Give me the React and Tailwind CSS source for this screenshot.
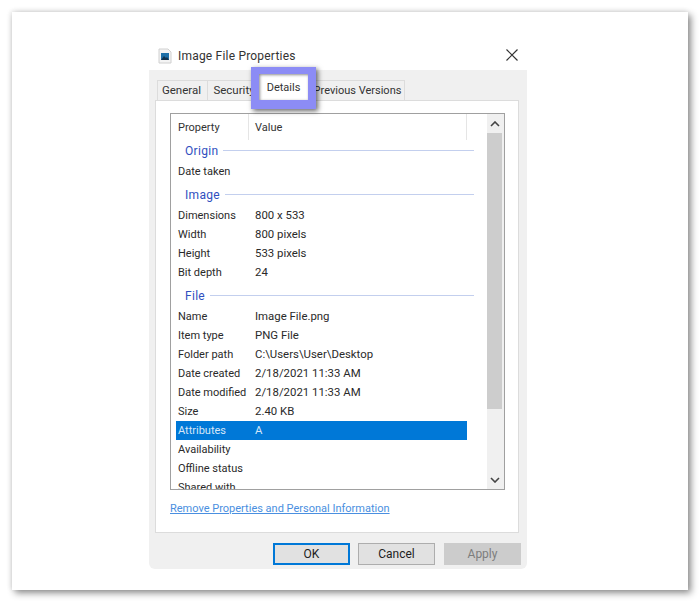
import React from "react";

const Row = ({ name, value, selected }) => (
  <div className={`ml-[5px] flex h-[19px] w-[291px] items-center pl-[2px] pt-[1px] ${selected ? "bg-[#0078d7] text-[#d5e6f7]" : "text-[#2a2a2a]"}`}>
    <span className="w-[77px] shrink-0 whitespace-nowrap text-[11px]">{name}</span>
    <span className="whitespace-nowrap text-[11.4px]">{value}</span>
  </div>
);

const Group = ({ title, mt }) => (
  <div className={`mb-[2px] flex h-[19px] w-[303px] items-center pl-[14px] ${mt}`}>
    <span className="text-[12px] tracking-[0.3px] text-[#2f4fc0]">{title}</span>
    <div className="ml-[5px] h-px flex-1 bg-[#c3cfee]"></div>
  </div>
);

const Tab = ({ label, width }) => (
  <div className={`flex h-[20px] items-center justify-center whitespace-nowrap border border-b-0 border-[#dcdcdc] bg-[#f0f0f0] pt-[1px] text-[#333] ${width}`}>
    {label}
  </div>
);

const Btn = ({ label, cls }) => (
  <div className={`flex h-[22px] w-[77px] items-center justify-center text-[12px] ${cls}`}>{label}</div>
);

export default function App() {
  return (
    <div className="h-[604px] w-[700px] bg-white pl-[12px] pt-[12px]" style={{ fontFamily: 'Roboto, sans-serif' }}>
      <div className="h-[578px] w-[676px] bg-white pl-[137px] pt-[34px] shadow-[3px_3px_7px_rgba(0,0,0,0.45),-1px_-1px_5px_rgba(0,0,0,0.1)]">
        <div className="relative w-[378px]">
          {/* title */}
          <div className="flex h-[24px] items-center pb-[4px] pl-[9px] pr-[8px]">
            <svg width="14" height="16" viewBox="0 0 14 16" className="mr-[6px] shrink-0">
              <path d="M1 1h9l3 3v11H1z" fill="#f4f4f4" stroke="#d0d0d0" />
              <rect x="3" y="5" width="8" height="7" fill="#1d6fa8" />
              <path d="M3 12l3-4 2 2 1-1 2 3z" fill="#12324e" />
            </svg>
            <span className="text-[12px] tracking-[0.2px] text-[#333]">Image File Properties</span>
            <svg width="14" height="14" viewBox="0 0 14 14" className="mb-[2px] ml-auto" fill="none" stroke="#333" strokeWidth="1.2">
              <path d="M1.5 1.5l11 11M12.5 1.5l-11 11" />
            </svg>
          </div>

          {/* dialog body */}
          <div className="rounded-b-[6px] bg-[#f0f0f0] pb-[4px] pl-[6px] pr-[8px] pt-[10px]">
            <div className="flex pl-[2px]">
              <Tab label="General" width="w-[51px] pr-[2px] text-[11.5px]" />
              <Tab label="Security" width="w-[54px] -ml-px text-[11.5px]" />
              <div className="w-[50px]"></div>
              <Tab label="Previous Versions" width="w-[95px] -ml-px text-[11px]" />
            </div>
            <div className="h-[433px] border border-[#dcdcdc] bg-white pl-[14px] pr-[13px] pt-[12px]">
              <div className="flex h-[377px] border border-[#a0a0a0]">
                <div className="w-[316px] overflow-hidden">
                  <div className="flex h-[26px] w-[296px] items-center text-[11px] text-[#333]">
                    <span className="w-[78px] border-r border-[#e5e5e5] pl-[7px] pt-[1px] leading-[25px]">Property</span>
                    <span className="flex-1 border-r border-[#e5e5e5] pl-[6px] pt-[1px] leading-[25px]">Value</span>
                  </div>
                  <Group title="Origin" mt="mt-[1px]" />
                  <Row name="Date taken" />
                  <Group title="Image" mt="mt-[4px]" />
                  <Row name="Dimensions" value="800 x 533" />
                  <Row name="Width" value="800 pixels" />
                  <Row name="Height" value="533 pixels" />
                  <Row name="Bit depth" value="24" />
                  <Group title="File" mt="mt-[4px]" />
                  <Row name="Name" value="Image File.png" />
                  <Row name="Item type" value="PNG File" />
                  <Row name="Folder path" value="C:\Users\User\Desktop" />
                  <Row name="Date created" value="2/18/2021 11:33 AM" />
                  <Row name="Date modified" value="2/18/2021 11:33 AM" />
                  <Row name="Size" value="2.40 KB" />
                  <Row name="Attributes" value="A" selected />
                  <Row name="Availability" />
                  <Row name="Offline status" />
                  <Row name="Shared with" />
                </div>
                <div className="flex w-[17px] flex-col bg-[#f0f0f0]">
                  <div className="flex h-[19px] w-[15px] items-center justify-center pt-[1px]">
                    <svg width="10" height="6" viewBox="0 0 10 6" fill="none" stroke="#444" strokeWidth="1.6"><path d="M1 5l4-4 4 4" /></svg>
                  </div>
                  <div className="h-[276px] w-[15px] bg-[#cdcdcd]"></div>
                  <div className="mt-auto flex h-[19px] w-[15px] items-center justify-center">
                    <svg width="10" height="6" viewBox="0 0 10 6" fill="none" stroke="#444" strokeWidth="1.6"><path d="M1 1l4 4 4-4" /></svg>
                  </div>
                </div>
              </div>
              <div className="mt-[10px] text-[11px] leading-[18px] text-[#4a8fe0] underline">
                Remove Properties and Personal Information
              </div>
            </div>
            <div className="-mr-[2px] mt-[10px] flex justify-end gap-[8px]">
              <Btn label="OK" cls="border-2 border-[#0078d7] bg-[#e1e1e1] text-[#222]" />
              <Btn label="Cancel" cls="mr-[1px] border border-[#adadad] bg-[#e1e1e1] text-[#222]" />
              <Btn label="Apply" cls="border border-[#cccccc] bg-[#cccccc] text-[#7d7d7d]" />
            </div>
          </div>

          {/* highlighted tab */}
          <div className="absolute left-[102px] top-[21px] flex h-[42px] w-[65px] items-center justify-center border-x-[8px] border-b-[9px] border-t-[7px] border-[#8c8cf5] bg-white pt-[2px] text-[11px] text-[#333] shadow-[2px_2px_5px_rgba(0,0,0,0.6),inset_1px_1px_3px_rgba(0,0,0,0.45)]">
            Details
          </div>
        </div>
      </div>
    </div>
  );
}
